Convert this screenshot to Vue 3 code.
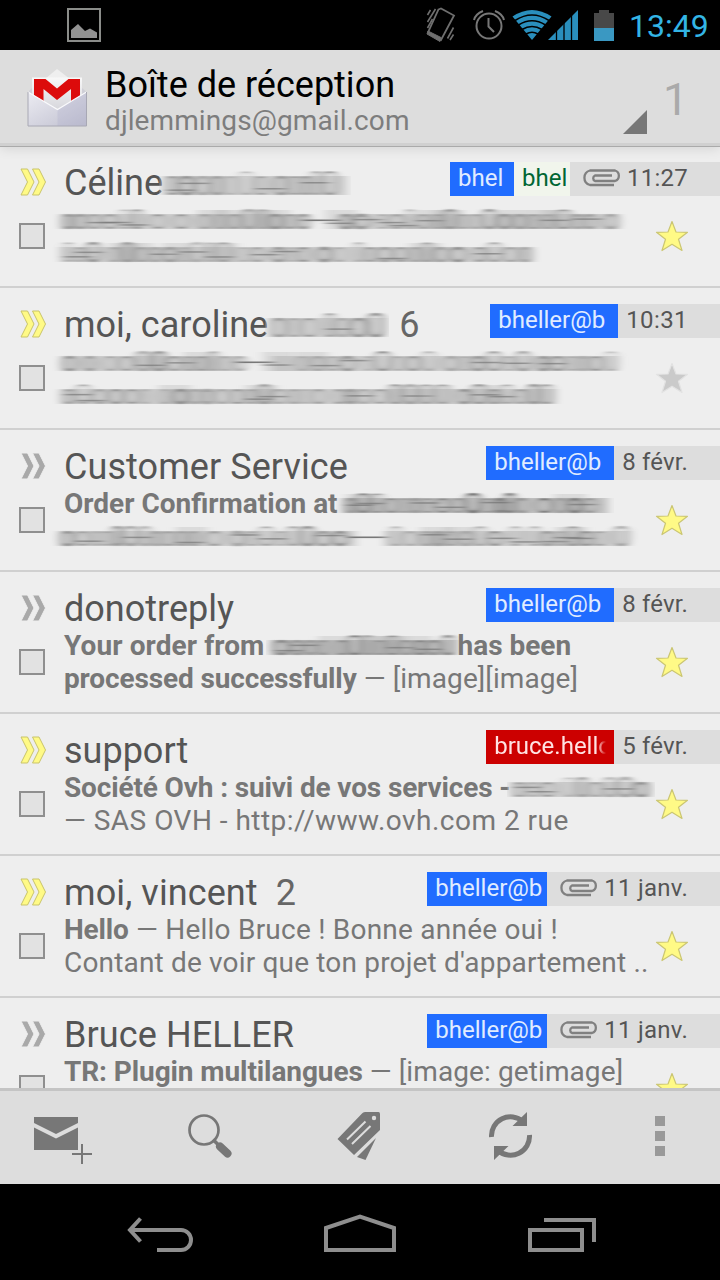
<template>
  <div class="screen">
    <div class="status-bar">
      <svg class="picture" width="34" height="34" viewBox="67 8 34 34">
        <rect x="68" y="9" width="32" height="32" fill="none" stroke="#8b8d8a" stroke-width="2" />
        <path d="M71 38V30l7-6 7 7 5-2.500 7 4V38z" fill="#929292" />
      </svg>
      <svg class="vibrate" width="30" height="36" viewBox="426 7 30 36" fill="none" stroke="#6f6f6f" stroke-width="1.600">
        <path d="M438.500 9.500 441 8.500 454 15.500 441 40 428 32.500z" stroke-width="1.800" />
        <path d="M428 31 441 37.500 440 41.500 427 34z" fill="#6f6f6f" stroke-width="1" />
        <path d="M427.500 15l3-5M427.500 22l8-13M427.500 28l5-9M453.500 27.500l-6 11M453.500 34.500l-3.500 5.500" />
      </svg>
      <svg class="alarm" width="32" height="32" viewBox="473 9 32 32" fill="none" stroke="#777" stroke-width="2">
        <circle cx="489" cy="26" r="12.500" />
        <path d="M488.500 18v8.500l5.500 5.500M474 20c1-4 4-7 9-9M504 20c-1-4-4-7-9-9" />
      </svg>
      <svg class="wifi" width="40" height="32" viewBox="512.500 9 40 32">
        <path d="M532.500 40 513 16.500Q532.500 3.500 552 16.500z" fill="#2a8fbd" />
        <path d="M515.500 20.500Q532.500 9.500 549.500 20.500M519 25Q532.500 16.500 546 25M522.500 29.500Q532.500 23.500 542.500 29.500M526.500 34Q532.500 30.500 538.500 34" fill="none" stroke="#000" stroke-width="1.600" />
      </svg>
      <svg class="signal" width="32" height="32" viewBox="547 9 32 32">
        <path d="M548 40 578 10V40z" fill="#2a8fbd" />
        <path d="M556.500 20V40M564 12V40M571.500 9V40" stroke="#000" stroke-width="1.300" />
      </svg>
      <svg class="battery" width="20" height="31" viewBox="594 9 20 31">
        <path d="M594 12h5V9h10v3h5v16h-20z" fill="#484848" />
        <path d="M594 27h20v13h-20z" fill="#3a98c2" />
      </svg>
      <span class="clock">13:49</span>
    </div>

    <header class="action-bar">
      <svg class="logo" width="62" height="62" viewBox="26 67 62 62">
        <defs>
          <linearGradient id="env" x1="0" y1="0" x2="1" y2="1">
            <stop offset="0" stop-color="#ececf2" />
            <stop offset="1" stop-color="#bfbfcf" />
          </linearGradient>
          <linearGradient id="paper" x1="0" y1="0" x2="0" y2="1">
            <stop offset="0" stop-color="#f8f8f8" />
            <stop offset="1" stop-color="#d4d4da" />
          </linearGradient>
        </defs>
        <path d="M28 92 32 88H82L86.500 92V110H28z" fill="#cfcfd7" />
        <path d="M45 79 57 69 70 79z" fill="#efefef" />
        <path d="M32 77.500H82V112H32z" fill="url(#paper)" />
        <path d="M34 79h11.500L57 88.500 68.500 79H80v21l-9 5V89L57 100 43.500 89v16L34 99z" fill="#dc0b0b" />
        <path d="M28 92 57.500 109.500 86.500 92V126H28z" fill="url(#env)" />
        <path d="M57.500 109.500V126H86.500V92z" fill="#a9a9c6" opacity=".25" />
        <path d="M28 92 57.500 109.500 86.500 92" fill="none" stroke="#fafafc" stroke-width="1.200" />
        <path d="M28 92V126H86.500V92" fill="none" stroke="#a8a8b4" stroke-width="1" />
      </svg>
      <div class="account">
        <div class="title">Boîte de réception</div>
        <div class="address">djlemmings@gmail.com</div>
      </div>
      <svg class="spinner" width="24" height="24" viewBox="0 0 24 24"><path d="M24 0V24H0z" fill="#777" /></svg>
      <span class="unread">1</span>
    </header>

    <main class="list">
      <article v-for="(m, i) in mails" :key="i" class="mail">
        <div class="gutter">
          <svg class="arrows" width="28" height="30" viewBox="0 0 28 30">
            <path
              v-for="x in [0, 11.500]" :key="x" :transform="`translate(${x} 0)`"
              d="M2 2H8.500L15 15 8.500 28H2L8.500 15z"
              :fill="m.important ? '#fffa86' : '#a9a9a9'" :stroke="m.important ? '#c9c46a' : '#eee'" stroke-width="1"
            />
          </svg>
          <span class="checkbox"></span>
        </div>
        <div class="content">
          <div class="top">
            <div class="sender">
              <span :style="{ letterSpacing: (m.ls || 0) + 'px' }">{{ m.sender }}</span>
              <svg v-if="m.blur" class="smear" :width="m.blur.w" height="42" :viewBox="`0 0 ${m.blur.w} 42`">
                <g filter="url(#smudge)">
                  <rect v-for="(g, k) in smudges(m.blur, 19, 33)" :key="k" v-bind="g" />
                </g>
              </svg>
              <span v-if="m.count" class="count" :style="{ marginLeft: m.countGap + 'px' }">{{ m.count }}</span>
            </div>
            <div class="labels">
              <span v-for="(l, k) in m.labels" :key="k" :class="['label', l.color]" :style="{ width: l.w + 'px' }">
                <span class="label-text">{{ l.text }}</span>
              </span>
              <span class="date" :style="{ letterSpacing: m.dateLs + 'px' }">
                <svg v-if="m.clip" class="clip" width="42" height="18" viewBox="0 0 42 18" fill="none" stroke="#808080" stroke-width="2.300">
                  <path d="M33 16H9A7.500 7.500 0 0 1 9 1.500H34A5.500 5.500 0 0 1 34 12H14A3 3 0 0 1 14 6.500H31" />
                </svg>
                {{ m.date }}
              </span>
            </div>
          </div>
          <div class="bottom">
            <div class="snippet">
              <div v-for="(line, n) in m.lines" :key="n" class="line">
                <template v-for="(s, k) in line" :key="k">
                  <svg v-if="s.w" class="smear" :style="{ marginLeft: s.m + 'px' }" :width="s.w" height="33" :viewBox="`0 0 ${s.w} 33`">
                    <g filter="url(#smudge)">
                      <rect v-for="(g, j) in smudges(s, 15, 26)" :key="j" v-bind="g" />
                    </g>
                  </svg>
                  <b v-else-if="s.b" :style="{ letterSpacing: s.ls + 'px' }">{{ s.b }}</b>
                  <span v-else :style="{ letterSpacing: s.ls + 'px' }">{{ s.t }}</span>
                </template>
              </div>
            </div>
            <svg class="star" width="34" height="32" viewBox="0 0 34 32">
              <path
                d="M17 1.500 21 12 32.500 12.300 23.500 19.300 27 30.500 17 24.300 7 30.500 10.500 19.300 1.500 12.300 13 12z" stroke-linejoin="round"
                :fill="m.star ? '#fffa86' : '#cacaca'" :stroke="m.star ? '#cbc673' : '#e2e2e2'" stroke-width="1.200"
              />
            </svg>
          </div>
        </div>
      </article>
    </main>

    <footer class="toolbar">
      <svg width="144" height="93" viewBox="0 1091 144 93" fill="#777">
        <path d="M34 1117H78V1123L56 1134 34 1123z" />
        <path d="M34 1127.500 56 1138.500 78 1127.500V1150H34z" />
        <path d="M72 1154H92M82 1144V1164" stroke="#777" stroke-width="2" />
      </svg>
      <svg width="144" height="93" viewBox="144 1091 144 93" fill="none" stroke="#777">
        <circle cx="204" cy="1130" r="14.500" stroke-width="2.700" />
        <path d="M213 1139.500 219 1145.500" stroke-width="3.500" />
        <path d="M220 1146.500 227.500 1153.500" stroke-width="8" stroke-linecap="round" />
      </svg>
      <svg width="144" height="93" viewBox="288 1091 144 93" fill="#777">
        <path d="M337.500 1139 362 1113.500Q363 1112 365 1112H378.500Q380 1112 380 1114V1130L354 1155z" />
        <path d="M357 1157 376 1138 365.500 1160z" />
        <path d="M347 1139.500 365.500 1121.500M352 1144 370.500 1126" stroke="#ddd" stroke-width="2" />
        <circle cx="374" cy="1118" r="2.200" fill="#ddd" />
      </svg>
      <svg width="144" height="93" viewBox="432 1091 144 93" fill="none" stroke="#777" stroke-width="5">
        <path d="M491.500 1137A19 19 0 0 1 523 1121.500M529.500 1135A19 19 0 0 1 498 1150.500" />
        <path d="M527 1112V1126H512.500zM494 1160V1146H508.500z" fill="#777" stroke="none" />
      </svg>
      <svg width="144" height="93" viewBox="576 1091 144 93" fill="#999">
        <path d="M655 1116h10v10h-10zM655 1131h10v10h-10zM655 1146h10v10h-10z" />
      </svg>
    </footer>

    <nav class="nav-bar">
      <svg width="720" height="96" viewBox="0 1184 720 96" fill="none" stroke="#8e8e8e" stroke-width="4">
        <path d="M140.500 1218.500 130 1230 140.500 1241.500M130 1230H181A10 10 0 0 1 181 1250H157" />
        <path d="M326 1228 360 1216.500 394 1228V1250H326z" />
        <path d="M530 1230H582V1250H530zM544 1220H594V1242" />
      </svg>
    </nav>

    <svg class="defs" width="0" height="0">
      <filter id="smudge" x="-2%" y="-10%" width="104%" height="120%">
        <feGaussianBlur stdDeviation="4 0.400" />
      </filter>
    </svg>
  </div>
</template>

<script setup>
const blue = (w = 128) => [{ text: 'bheller@b', color: 'blue', w }];

const mails = [
  {
    sender: 'Céline', important: true, star: true, blur: { w: 184 }, clip: true, date: '11:27', dateLs: 0.25,
    labels: [{ text: 'bhel', color: 'blue', w: 64 }, { text: 'bhel', color: 'green', w: 56 }],
    lines: [[{ w: 560, m: -4, gap: 256 }], [{ w: 474, m: -4 }]],
  },
  {
    sender: 'moi, caroline', important: true, star: false, blur: { w: 118 }, count: 6, countGap: 13, date: '10:31', dateLs: 0.4,
    labels: blue(),
    lines: [[{ w: 558, m: -4, gap: 190 }], [{ w: 496, m: -4 }]],
  },
  {
    sender: 'Customer Service', ls: 0.07, star: true, date: '8 févr.', dateLs: 0.15, labels: blue(),
    lines: [[{ b: 'Order Confirmation at' }, { w: 266, m: 4, dark: true }], [{ w: 572, m: -6, gap: 304 }]],
  },
  {
    sender: 'donotreply', star: true, date: '8 févr.', dateLs: 0.15, labels: blue(),
    lines: [
      [{ b: 'Your order from', ls: 0.1 }, { w: 187, m: 6, dark: true }, { b: 'has been' }],
      [{ b: 'processed successfully', ls: -0.13 }, { t: ' — [image][image]', ls: 0.1 }],
    ],
  },
  {
    sender: 'support', important: true, star: true, date: '5 févr.', dateLs: 0.15,
    labels: [{ text: 'bruce.hello', color: 'red', w: 128 }],
    lines: [
      [{ b: 'Société Ovh : suivi de vos services -', ls: -0.14 }, { w: 142, m: 0 }],
      [{ t: '— SAS OVH - http://www.ovh.com 2 rue', ls: 0.48 }],
    ],
  },
  {
    sender: 'moi, vincent', ls: 0.1, important: true, star: true, count: 2, countGap: 18, clip: true, date: '11 janv.', dateLs: 0.25,
    labels: blue(120),
    lines: [
      [{ b: 'Hello', ls: -0.15 }, { t: ' — Hello Bruce ! Bonne année oui !', ls: 0.23 }],
      [{ t: "Contant de voir que ton projet d'appartement ..", ls: 0.17 }],
    ],
  },
  {
    sender: 'Bruce HELLER', ls: 0.1, star: true, clip: true, date: '11 janv.', dateLs: 0.25, labels: blue(120),
    lines: [[{ b: 'TR: Plugin multilangues', ls: -0.09 }, { t: ' — [image: getimage]', ls: 0.1 }], []],
  },
];

// letter-like rounded boxes and streaks, smudged sideways by the filter
function smudges({ w: width, gap, dark }, xHeight, base) {
  const out = [];
  const top = base - xHeight;
  let seed = width * 7 + xHeight;
  const rnd = () => {
    seed = (seed * 9301 + 49297) % 233280;
    return seed / 233280;
  };
  const inGap = (x) => gap && x > gap - 14 && x < gap + 24;
  const parts = gap ? [[0, gap - 6], [gap + 22, width]] : [[0, width]];
  for (const [from, to] of parts) {
    out.push({ x: from, y: top, width: to - from, height: xHeight, fill: dark ? '#c2c2c2' : '#cfcfcf' });
  }
  if (gap) out.push({ x: gap - 14, y: base - 9.5, width: 38, height: 1.6, fill: '#777' });
  let x = 4;
  while (x < width - 12) {
    const w = 8 + rnd() * 7;
    const tall = rnd() > 0.75 ? 5 : 0;
    if (!inGap(x)) {
      out.push({
        x, y: top + 1 - tall, width: w, height: xHeight - 2 + tall, rx: w / 2.2,
        fill: 'none', stroke: dark ? '#666' : '#808080', 'stroke-width': 1.4 + rnd() * 1.4, opacity: 0.5 + rnd() * 0.5,
      });
    }
    if (rnd() > 0.8 && x < width - 44 && !inGap(x + 20)) {
      out.push({ x, y: top - 4, width: 32, height: xHeight + 4, fill: '#aaa', opacity: 0.28 });
    }
    if (rnd() > 0.7 && x < width - 36 && !inGap(x + 20)) {
      out.push({ x, y: top + 3 + rnd() * (xHeight - 7), width: 28, height: 1.5, fill: '#777', opacity: 0.7 });
    }
    x += w + (rnd() > 0.85 ? 9 : 2.5);
  }
  return out;
}
</script>

<style>
body {
  margin: 0;
  background: #000;
}
</style>

<style scoped>
.screen {
  width: 720px;
  height: 1280px;
  overflow: hidden;
  display: flex;
  flex-direction: column;
  background: #000;
  font-family: Roboto, 'Noto Sans', sans-serif;
}
svg {
  display: block;
  flex-shrink: 0;
}
.status-bar {
  height: 50px;
  display: flex;
  align-items: center;
}
.picture { margin-left: 67px; }
.vibrate { margin-left: 325px; }
.alarm { margin-left: 17px; }
.wifi { margin-left: 7px; }
.signal { margin-left: -5px; }
.battery { margin-left: 15px; }
.clock {
  margin-left: 15px;
  padding-top: 2px;
  font-size: 32px;
  color: #33b5e5;
  white-space: nowrap;
}
.action-bar {
  height: 93px;
  margin-bottom: -1px;
  border-bottom: 3px solid #d0d0d0;
  box-shadow: 0 1px 0 #aaa, 0 2px 12px rgba(0, 0, 0, 0.12);
  position: relative;
  z-index: 1;
  background: #ddd;
  display: flex;
}
.logo { margin: 17px 0 0 26px; }
.account {
  margin: 15px 0 0 17px;
  width: 518px;
  white-space: nowrap;
}
.title {
  font-size: 36px;
  line-height: 40px;
  color: #000;
}
.address {
  font-size: 28px;
  line-height: 31px;
  letter-spacing: 0.1px;
  color: #7d7d7d;
}
.spinner { margin-top: 60px; }
.unread {
  margin: 22px 0 0 16px;
  font-size: 45px;
  line-height: 55px;
  color: #aaa;
}
.list {
  height: 943px;
  overflow: hidden;
  background: #eee;
}
.mail {
  box-sizing: border-box;
  height: 142px;
  border-bottom: 2px solid #d0d0d0;
  display: flex;
  white-space: nowrap;
}
.mail:first-child {
  height: 143px;
  padding-top: 1px;
}
.gutter {
  width: 64px;
  flex-shrink: 0;
}
.arrows { margin: 21px 0 0 19px; }
.checkbox {
  display: block;
  box-sizing: border-box;
  width: 26px;
  height: 26px;
  margin: 26px 0 0 19px;
  border: 2px solid #8f8f8f;
  background: #e2e2e2;
}
.content {
  flex: 1;
  min-width: 0;
  padding-top: 16px;
}
.top {
  display: flex;
  justify-content: space-between;
  height: 41px;
}
.sender {
  display: flex;
  font-size: 36px;
  line-height: 43px;
  color: #555;
}
.smear { overflow: visible; }
.count { color: #666; }
.labels {
  display: flex;
  height: 34px;
  font-size: 24px;
  line-height: 32px;
}
.label {
  box-sizing: border-box;
  padding-left: 8px;
}
.label-text {
  display: block;
  overflow: hidden;
}
.blue {
  background: #206cff;
  color: #e0ecff;
}
.green {
  background: #f1f5ec;
  color: #063;
}
.red {
  padding-right: 8px;
  background: #c00;
  color: #ffe3e3;
}
.red .label-text { mask-image: linear-gradient(to left, transparent, #000 9px); }
.date {
  display: flex;
  padding: 0 32px 0 8px;
  background: #ddd;
  color: #555;
}
.clip { margin: 7px 4px 0 3px; }
.bottom { display: flex; }
.snippet {
  width: 591px;
  font-size: 28px;
  color: #777;
}
.line {
  display: flex;
  height: 33px;
  line-height: 33px;
  white-space: pre;
}
.star { margin-top: 17px; }
.toolbar {
  height: 93px;
  border-top: 3px solid #c4c4c4;
  background: #ddd;
  display: flex;
}
.nav-bar { height: 96px; }
.defs { position: absolute; }
</style>
